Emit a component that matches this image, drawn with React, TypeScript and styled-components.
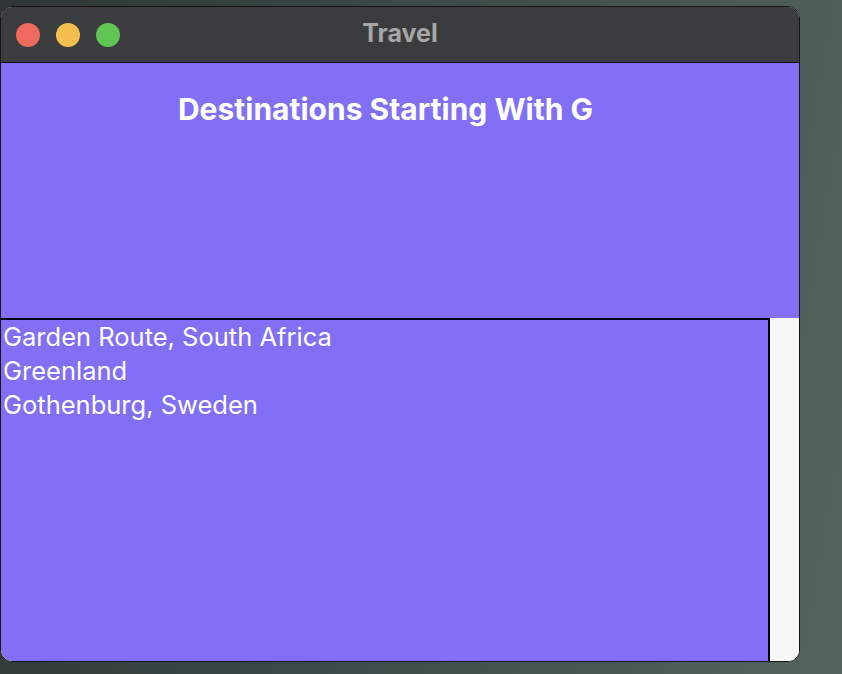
import * as React from "react";
import styled, { createGlobalStyle } from "styled-components";

const GlobalStyle = createGlobalStyle`
  html, body {
    margin: 0;
    padding: 0;
  }
  body {
    width: 842px;
    height: 674px;
    overflow: hidden;
    background: linear-gradient(100deg, #2e3735 0%, #3d4a47 45%, #55645f 100%);
    font-family: Inter, "Noto Sans", sans-serif;
  }
`;

const Desktop = styled.div`
  padding-top: 6px;
  height: 674px;
  box-sizing: border-box;
`;

const Window = styled.div`
  width: 800px;
  height: 656px;
  box-sizing: border-box;
  border: 1px solid #141414;
  border-radius: 12px;
  overflow: hidden;
  display: flex;
  flex-direction: column;
  background: #f8f8f8;
`;

const TitleBar = styled.div`
  height: 55px;
  flex: none;
  display: flex;
  align-items: center;
  position: relative;
  background: #3b3c3e;
  border-bottom: 1px solid #111;
`;

const Lights = styled.div`
  display: flex;
  gap: 16px;
  padding-left: 15px;
`;

const Light = styled.span<{ color: string }>`
  width: 24px;
  height: 24px;
  border-radius: 50%;
  background: ${(p) => p.color};
`;

const Title = styled.div`
  position: absolute;
  left: 0;
  right: 0;
  top: 12px;
  text-align: center;
  font-size: 25px;
  line-height: 28px;
  font-weight: 700;
  color: #a6a6a7;
  pointer-events: none;
`;

const Header = styled.div`
  height: 255px;
  flex: none;
  background: #8170f6;
`;

const Heading = styled.h1`
  width: 769px;
  margin: 0;
  padding-top: 28px;
  text-align: center;
  font-size: 30px;
  line-height: 36px;
  font-weight: 700;
  color: #fff;
`;

const Body = styled.div`
  flex: 1;
  display: flex;
  min-height: 0;
`;

const List = styled.ul`
  width: 769px;
  box-sizing: border-box;
  margin: 0;
  padding: 0 0 0 2px;
  list-style: none;
  background: #8170f6;
  border-top: 2px solid #000;
  border-right: 2px solid #000;
  border-bottom-left-radius: 11px;
`;

const Item = styled.li`
  font-size: 25.5px;
  line-height: 34px;
  color: #fff;
`;

const Scroller = styled.div`
  flex: 1;
  background: #f8f8f8;
`;

const destinations = ["Garden Route, South Africa", "Greenland", "Gothenburg, Sweden"];

export default function App() {
  return (
    <Desktop>
      <GlobalStyle />
      <Window>
        <TitleBar>
          <Lights>
            <Light color="#ee6a5e" />
            <Light color="#f5bf4f" />
            <Light color="#61c554" />
          </Lights>
          <Title>Travel</Title>
        </TitleBar>
        <Header>
          <Heading>Destinations Starting With G</Heading>
        </Header>
        <Body>
          <List>
            {destinations.map((d) => (
              <Item key={d}>{d}</Item>
            ))}
          </List>
          <Scroller />
        </Body>
      </Window>
    </Desktop>
  );
}
